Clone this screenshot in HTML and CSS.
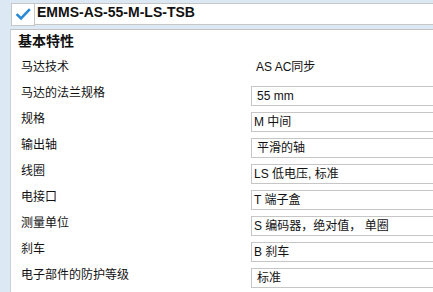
FILE: index.html
```html
<!DOCTYPE html>
<html lang="zh">
<head>
<meta charset="utf-8">
<link rel="stylesheet" href="styles.css">
</head>
<body>
<div class="header">
  <div class="check">
    <svg width="16" height="14" viewBox="0 0 16 14"><path d="M2.5 7 L6 10.5 L14 2" fill="none" stroke="#2b8ad6" stroke-width="2.6" stroke-linecap="square"/></svg>
  </div>
  <div class="title">EMMS-AS-55-M-LS-TSB</div>
</div>
<div class="panel">
  <div class="heading">基本特性</div>
  <div class="row"><div class="label">马达技术</div><div class="value plain">AS AC同步</div></div>
  <div class="row"><div class="label">马达的法兰规格</div><div class="value box indent">55 mm</div></div>
  <div class="row"><div class="label">规格</div><div class="value box">M 中间</div></div>
  <div class="row"><div class="label">输出轴</div><div class="value box indent">平滑的轴</div></div>
  <div class="row"><div class="label">线圈</div><div class="value box">LS 低电压, 标准</div></div>
  <div class="row"><div class="label">电接口</div><div class="value box">T 端子盒</div></div>
  <div class="row"><div class="label">测量单位</div><div class="value box">S 编码器，绝对值， 单圈</div></div>
  <div class="row"><div class="label">刹车</div><div class="value box">B 刹车</div></div>
  <div class="row last"><div class="label">电子部件的防护等级</div><div class="value box indent">标准</div></div>
</div>
</body>
</html>
```
FILE: styles.css
```css
html, body {
  margin: 0;
  padding: 0;
  overflow: hidden;
}
body {
  background: #dce9f5;
  font-family: "Liberation Sans", "Noto Sans CJK SC", sans-serif;
  color: #111;
  font-size: 12px;
  height: 292px;
  display: flex;
  flex-direction: column;
}
.header {
  display: flex;
  margin: 3px 0 0 11px;
  height: 22px;
}
.check {
  box-sizing: border-box;
  width: 24px;
  height: 23px;
  background: #fff;
  border: 1px solid #c6c6c6;
  display: flex;
  align-items: center;
  justify-content: center;
  padding-top: 1px;
}
.title {
  flex: 1;
  background: #fff;
  border-top: 1px solid #c6c6c6;
  border-bottom: 1px solid #c6c6c6;
  font-weight: bold;
  font-size: 14px;
  line-height: 16px;
  padding-left: 2px;
}
.panel {
  flex: 1;
  margin: 4px 0 0 10px;
  background: #fff;
  border-top: 1px solid #c2c2c2;
  border-left: 1px solid #c8d2dc;
}
.heading {
  font-weight: bold;
  font-size: 14px;
  line-height: 20px;
  padding: 1px 0 6px 7px;
}
.row {
  display: flex;
  height: 26px;
  padding-left: 10px;
}
.row.last {
  height: 23px;
}
.label {
  width: 230px;
  line-height: 21px;
}
.value {
  flex: 1;
  line-height: 18px;
}
.plain {
  line-height: 21px;
  padding-left: 5px;
}
.box {
  margin-top: 3px;
  height: 18px;
  border: 1px solid #c6c6c6;
  border-right: none;
  padding-left: 2px;
}
.indent {
  padding-left: 5px;
}
```
